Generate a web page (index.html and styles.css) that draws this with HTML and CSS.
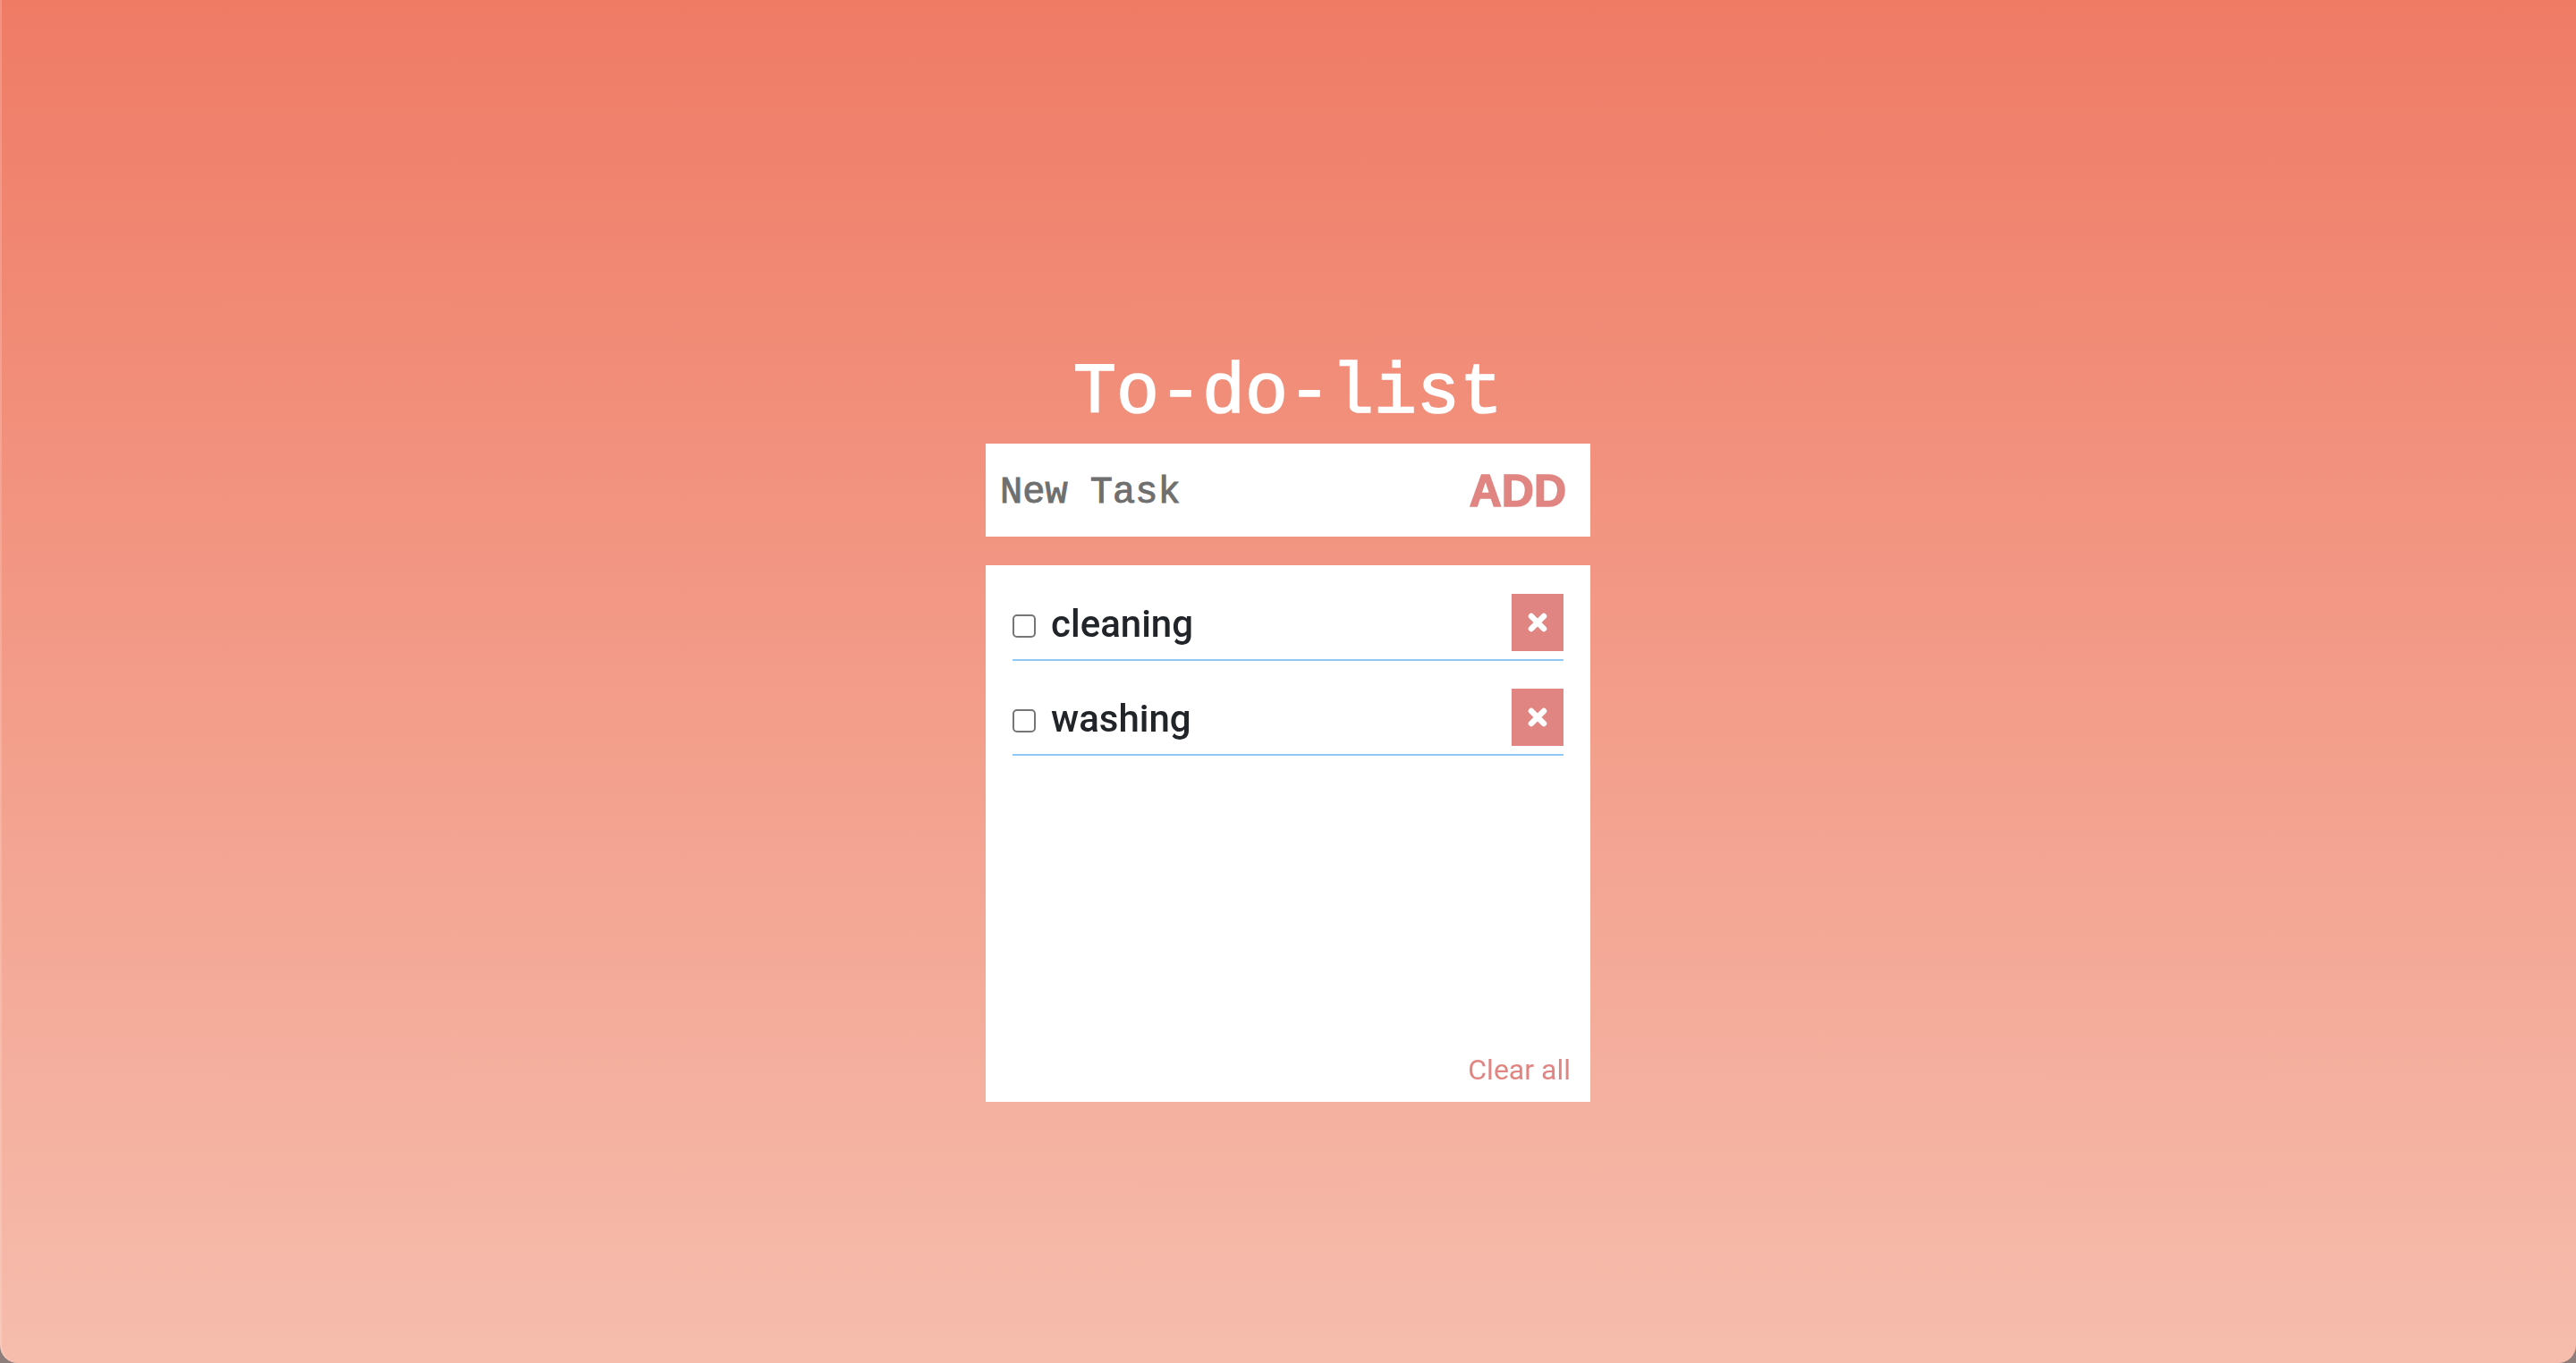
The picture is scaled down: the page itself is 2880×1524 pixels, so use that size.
FILE: index.html
```html
<!DOCTYPE html>
<html lang="en">
<head>
<meta charset="utf-8">
<title>To-do-list</title>
<link rel="stylesheet" href="styles.css">
</head>
<body>
<div class="window">
  <main class="app">
    <h1 class="title">To-do-list</h1>
    <form class="new-task" onsubmit="return false">
      <input class="new-task-input" type="text" placeholder="New Task" autofocus>
      <button class="add-btn" type="submit">ADD</button>
    </form>
    <section class="card">
      <ul class="task-list">
        <li class="task">
          <input class="task-check" type="checkbox">
          <span class="task-text">cleaning</span>
          <button class="del-btn" type="button" aria-label="Delete">
            <svg class="del-icon" viewBox="0 0 22 22" width="22" height="22"><path d="M4 4 L18 18 M18 4 L4 18" stroke="#fff" stroke-width="6.5" stroke-linecap="round" fill="none"/></svg>
          </button>
        </li>
        <li class="task">
          <input class="task-check" type="checkbox">
          <span class="task-text">washing</span>
          <button class="del-btn" type="button" aria-label="Delete">
            <svg class="del-icon" viewBox="0 0 22 22" width="22" height="22"><path d="M4 4 L18 18 M18 4 L4 18" stroke="#fff" stroke-width="6.5" stroke-linecap="round" fill="none"/></svg>
          </button>
        </li>
      </ul>
      <div class="card-footer">
        <button class="clear-btn" type="button">Clear all</button>
      </div>
    </section>
  </main>
</div>
</body>
</html>
```
FILE: styles.css
```css
html {
  margin: 0;
  background: #8d7d7b;
}
body {
  margin: 0;
  height: 1524px;
  overflow: hidden;
}
.window {
  height: 1524px;
  background: linear-gradient(180deg, #ef7b65 0%, #f6bdad 100%);
  border-radius: 0 0 20px 20px;
  display: flex;
  justify-content: center;
  box-shadow: inset 2px 0 0 rgba(255,255,255,0.18);
}
.app {
  width: 676px;
  padding-top: 400px;
  display: flex;
  flex-direction: column;
}
.title {
  margin: 0 0 16px;
  font-family: "Liberation Mono", "Courier New", monospace;
  font-weight: normal;
  font-size: 80px;
  line-height: 80px;
  color: #fff;
  -webkit-text-stroke: 1.6px #fff;
  text-align: center;
}
.new-task {
  height: 104px;
  background: #fff;
  display: flex;
  align-items: center;
  padding: 6px 27px 0 16px;
  box-sizing: border-box;
  margin: 0;
}
.new-task-input {
  flex: 1;
  min-width: 0;
  border: none;
  outline: none;
  background: transparent;
  font-family: "Liberation Mono", "Courier New", monospace;
  font-size: 42px;
  color: #222;
  caret-color: #000;
  padding: 0;
}
.new-task-input::placeholder {
  color: #6f6f6f;
  -webkit-text-stroke: 1px #6f6f6f;
}
.add-btn {
  border: none;
  background: none;
  padding: 0;
  margin-top: -4px;
  font-family: "Liberation Sans", Arial, sans-serif;
  font-weight: 900;
  font-size: 50px;
  color: #e08582;
  -webkit-text-stroke: 1.5px #e08582;
  cursor: pointer;
}
.card {
  margin-top: 32px;
  height: 600px;
  box-sizing: border-box;
  background: #fff;
  padding: 32px 0 17px;
  display: flex;
  flex-direction: column;
}
.task-list {
  list-style: none;
  margin: 0;
  padding: 0 30px;
  flex: 1;
}
.task {
  display: flex;
  align-items: center;
  padding-bottom: 9px;
  border-bottom: 2px solid #90c9f5;
  margin-bottom: 31px;
}
.task-check {
  appearance: none;
  -webkit-appearance: none;
  width: 26px;
  height: 26px;
  margin: 8px 17px 0 0;
  border: 2px solid #767676;
  border-radius: 5px;
  background: #fff;
  box-sizing: border-box;
  flex: none;
}
.task-text {
  flex: 1;
  font-family: Roboto, "Liberation Sans", sans-serif;
  font-size: 42px;
  font-weight: 500;
  padding-top: 2px;
  color: #212529;
}
.del-btn {
  width: 58px;
  height: 64px;
  border: none;
  padding: 0;
  background: #e08582;
  display: flex;
  align-items: center;
  justify-content: center;
  cursor: pointer;
}
.del-icon {
  display: block;
}
.card-footer {
  display: flex;
  justify-content: flex-end;
  padding-right: 22px;
}
.clear-btn {
  border: none;
  background: none;
  padding: 0;
  font-family: Roboto, "Liberation Sans", sans-serif;
  font-size: 32px;
  color: #e08582;
  cursor: pointer;
}
```
